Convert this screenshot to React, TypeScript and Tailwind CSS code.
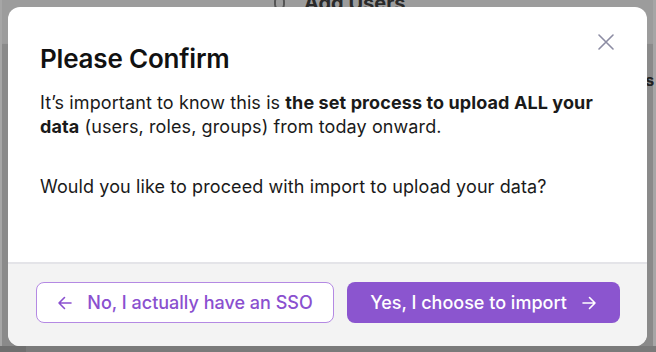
import React from "react";

export default function App() {
  return (
    <div
      className="relative w-[656px] h-[352px] overflow-hidden bg-[#8a8a8a]"
      style={{ fontFamily: "Inter, 'Noto Sans', sans-serif" }}
    >
      {/* background page (dimmed) */}
      <div className="absolute inset-0">
        <div className="h-[44px] border-b border-[#9a9a9a] bg-[#9c9c9c]"></div>
        <div className="absolute left-0 top-0 h-full w-[2px] bg-[#a6a6a6]"></div>
        <div className="absolute right-0 top-0 h-full w-[3px] bg-[#a6a6a6]"></div>
        <div className="absolute left-0 bottom-0 h-[6px] w-full bg-[#7a7a7a]"></div>
        <div className="absolute left-0 bottom-0 h-[6px] w-[26px] bg-[#6f6f6f]"></div>
        <div className="absolute left-[274px] top-[-9px] flex items-center gap-[19px] text-[#2a2a2a]">
          <span className="block w-[11px] h-[14px] rounded-full border-2 border-[#555]"></span>
          <span className="text-[20px] font-bold leading-[24px]">Add Users</span>
        </div>
        <div className="absolute left-[636px] top-[70px] text-[16px] font-bold text-[#222] leading-[20px]">as</div>
      </div>

      {/* modal */}
      <div className="absolute left-[8px] top-[7px] w-[639px] h-[339px] rounded-[12px] bg-white overflow-hidden flex flex-col">
        <div className="relative flex-1 px-8 pt-[36px]">
          <button className="absolute left-[590px] top-[27px] text-[#8c8ca3]">
            <svg width="16" height="16" viewBox="0 0 16 16" fill="none" stroke="currentColor" strokeWidth="1.6" strokeLinecap="round">
              <path d="M1 1L15 15M15 1L1 15" />
            </svg>
          </button>
          <h2 className="text-[26px] font-semibold leading-[32px] text-[#111] tracking-[-0.2px]">Please Confirm</h2>
          <p className="mt-[16px] text-[18px] leading-[24px] text-[#1a1a1a] tracking-[0.1px]">
            It’s important to know this is <b className="font-bold">the set process to upload ALL your</b>
            <br />
            <b className="font-bold">data</b> (users, roles, groups) from today onward.
          </p>
          <p className="mt-[36px] text-[18px] leading-[24px] text-[#1a1a1a] tracking-[0.1px]">
            Would you like to proceed with import to upload your data?
          </p>
        </div>
        <div className="h-[84px] shrink-0 border-t-2 border-[#e4e4e8] bg-[#f3f3f3] flex items-start gap-[13px] pl-[28px] pt-[18px]">
          <button className="h-[41px] w-[298px] rounded-[8px] border border-[#b489e3] bg-white flex items-center justify-center gap-[14px] text-[#8a50cf] text-[18px] font-medium">
            <svg width="16" height="16" viewBox="0 0 16 16" fill="none" stroke="currentColor" strokeWidth="1.6" strokeLinecap="round" strokeLinejoin="round">
              <path d="M14 8H2M7.5 2.5L2 8l5.5 5.5" />
            </svg>
            <span>No, I actually have an SSO</span>
          </button>
          <button className="h-[41px] w-[273px] rounded-[8px] bg-[#8b55cf] flex items-center justify-center gap-[14px] text-white text-[18px] font-medium">
            <span>Yes, I choose to import</span>
            <svg width="16" height="16" viewBox="0 0 16 16" fill="none" stroke="currentColor" strokeWidth="1.6" strokeLinecap="round" strokeLinejoin="round">
              <path d="M2 8h12M8.5 2.5L14 8l-5.5 5.5" />
            </svg>
          </button>
        </div>
      </div>
    </div>
  );
}
